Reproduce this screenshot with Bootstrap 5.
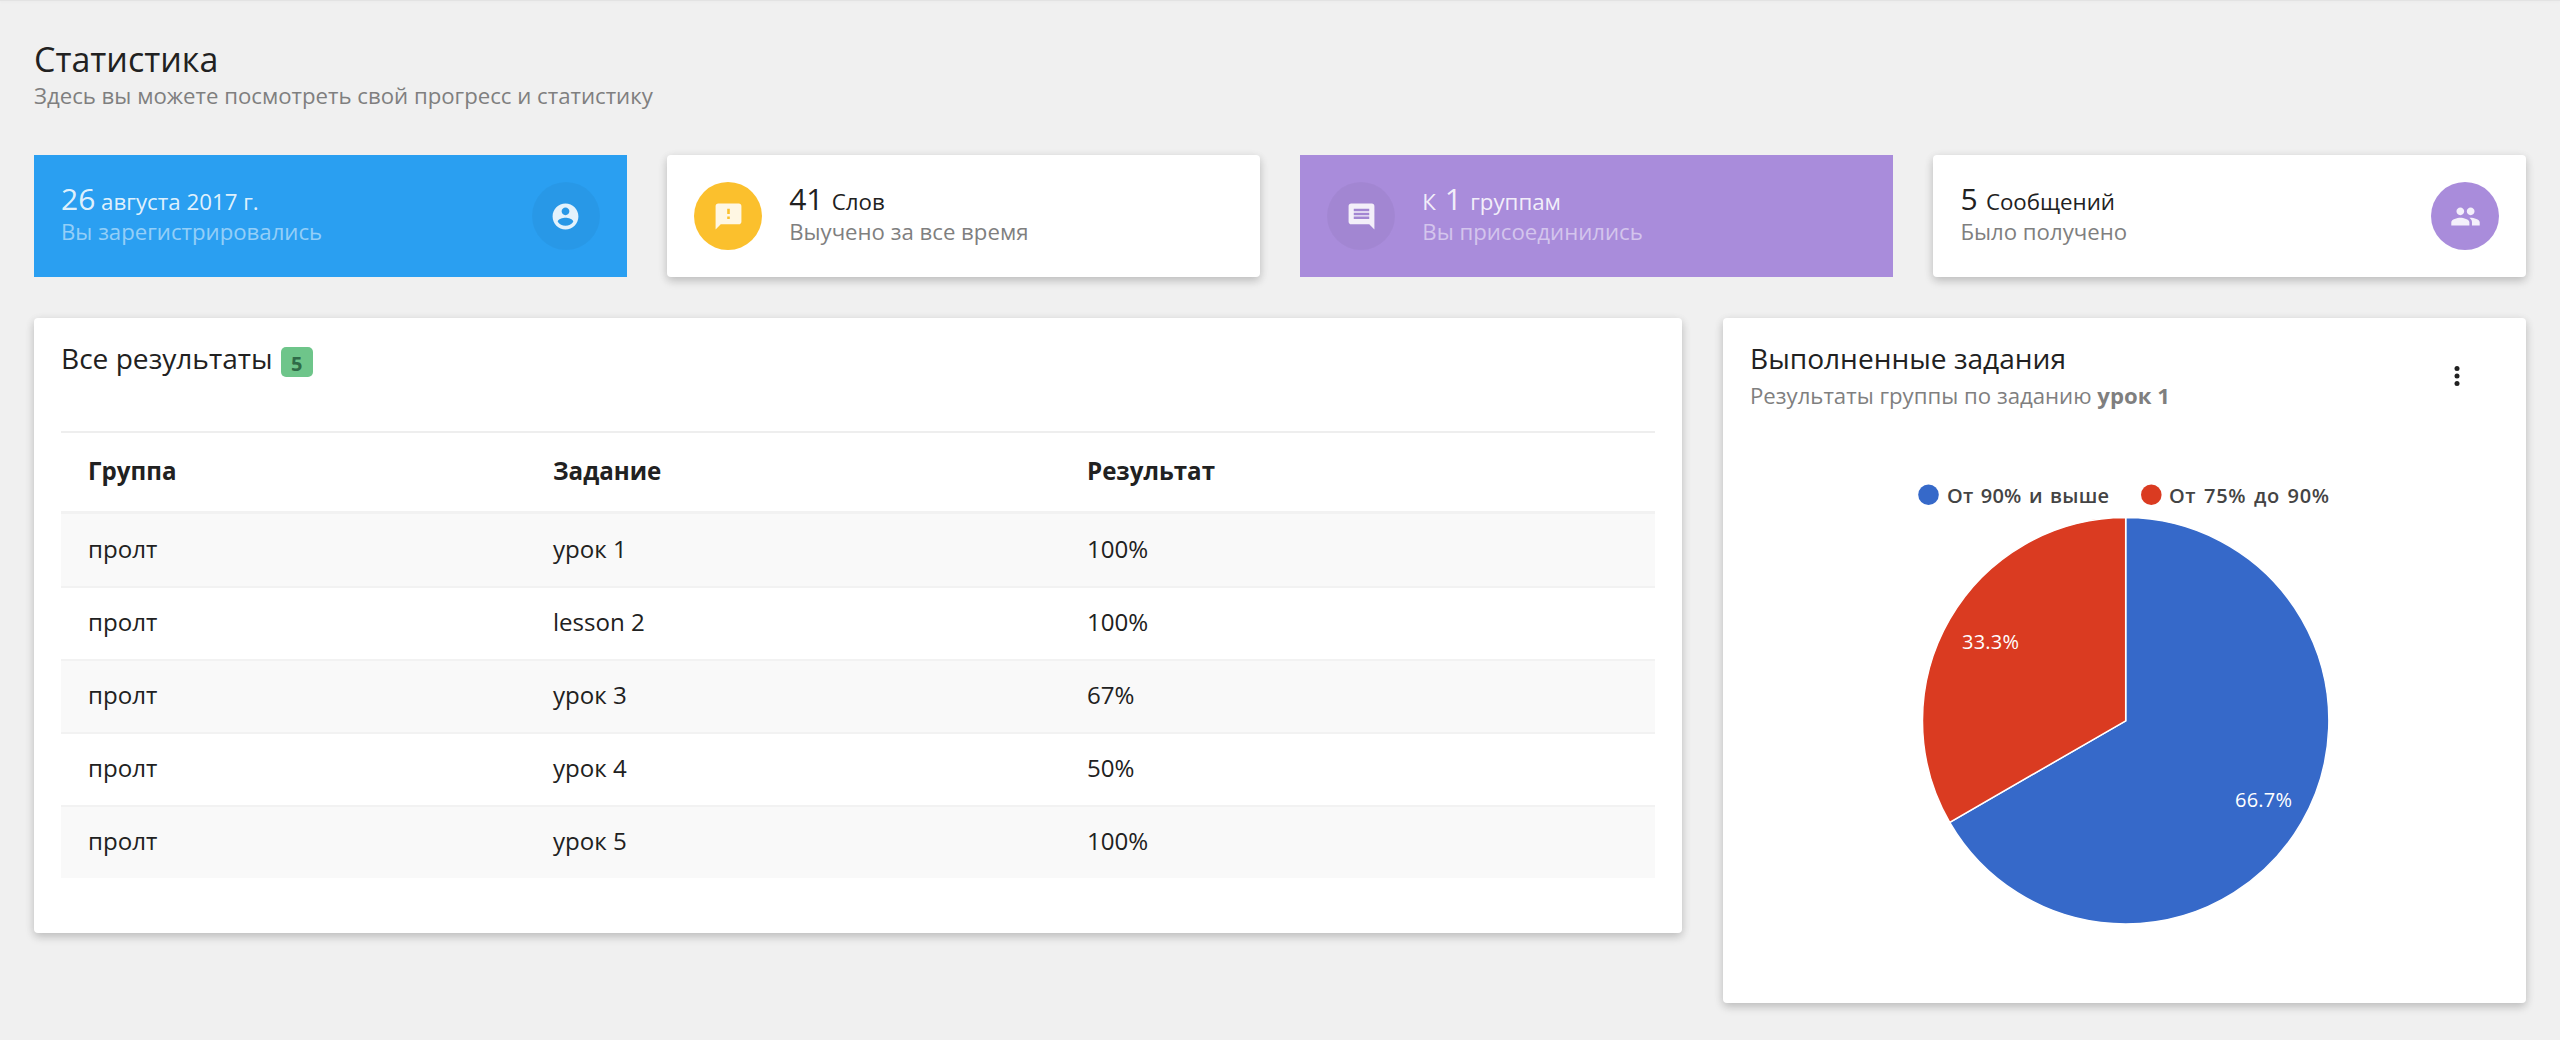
<!DOCTYPE html>
<html lang="ru">
<head>
<meta charset="utf-8">
<title>Статистика</title>
<link href="https://cdn.jsdelivr.net/npm/bootstrap@5.3.0/dist/css/bootstrap.min.css" rel="stylesheet">
<style>
body{font-family:"Open Sans","Noto Sans",sans-serif;background:#f0f0f0;color:#212121;min-height:1040px;overflow:hidden}
.topline{height:1px;background:#e3e3e3;box-shadow:0 1px 3px rgba(0,0,0,.05)}
.page{padding:34px 34px 0}
.page-title{font-size:34px;line-height:48px;font-weight:400;margin:0}
.sub{font-size:22.2px;line-height:26px;color:#7f7f7f;margin:0}
.panel{background:#fff;border-radius:4px;box-shadow:0 4px 10px rgba(0,0,0,.16),0 2px 10px rgba(0,0,0,.08)}
.stats{display:grid;grid-template-columns:repeat(4,1fr);gap:40.6px;margin-top:46px}
.stat{height:122px;padding:0 27px}
.stat-blue{background:#2a9ff1;color:rgba(255,255,255,.87)}
.stat-purple{background:#a98cdb;color:rgba(255,255,255,.87)}
.stat-blue .sub,.stat-purple .sub{color:rgba(255,255,255,.5)}
.num{font-size:30px}
.lbl{font-size:22.3px;line-height:34px;white-space:nowrap}
.num-gap{margin-right:2.5px}
.num-lead{margin-left:3px}
.stat .sub{line-height:26px;margin-bottom:5px}
.disc{width:68px;height:68px;border-radius:50%;flex:none;background:rgba(0,0,0,.04)}
.disc + div{margin-left:27px}
.disc svg{width:31px;height:31px;fill:rgba(255,255,255,.87)}
.disc-amber{background:#fbc02d}.disc-purple{background:#a98cdb}
.lower{display:grid;grid-template-columns:1648px 1fr;gap:41px;margin-top:41px;align-items:start}
.results{height:615px;padding:17px 27px}
.ttl{font-size:28.1px;line-height:46px;font-weight:400;margin:0}
.count{background:#6ec58a;color:#2f6b48;font-size:20px;line-height:34px;width:32px;height:30px;border-radius:5px;font-weight:700;text-align:center;margin:7px 0 0 8px}
.tbl{width:100%;margin:50px 0 0;font-size:24.1px;table-layout:fixed;border-collapse:separate;border-spacing:0}
.tbl th,.tbl td{padding:0 27px 3px;height:73px;border-top:2px solid #f2f2f2;vertical-align:middle;line-height:32px;color:#212121}
.tbl th{height:80px;border-top-color:#eee;padding-bottom:2px}
.tbl tbody tr:first-child td{border-top-width:3px;height:75px}
.tbl tbody tr:nth-child(odd) td{background:#f9f9f9}
.c-group{width:465px}.c-task{width:534px}
.chart-card{height:685px;padding:17px 27px}
.chart-card .sub{margin-top:2px}
.more{width:30px;height:30px;fill:#212121;margin:26px 27px 0 0}
.chart{display:block;width:749px;height:500px;margin-top:26px}
.chart text{font-size:20px}
.chart .legend{font-weight:600;fill:#444;word-spacing:2px}
</style>
</head>
<body>
<div class="topline"></div>
<main class="page">
<h1 class="page-title">Статистика</h1>
<p class="sub">Здесь вы можете посмотреть свой прогресс и статистику</p>
<section class="stats">
<div class="stat stat-blue d-flex align-items-center justify-content-between">
<div><div class="lbl"><span class="num">26</span> августа 2017 г.</div><p class="sub">Вы зарегистрировались</p></div>
<div class="disc d-flex align-items-center justify-content-center"><svg viewBox="0 0 24 24"><path d="M12 2C6.480 2 2 6.480 2 12s4.480 10 10 10 10-4.480 10-10S17.520 2 12 2zm0 3c1.660 0 3 1.340 3 3s-1.340 3-3 3-3-1.340-3-3 1.340-3 3-3zm0 14.200c-2.500 0-4.710-1.280-6-3.220.03-1.990 4-3.080 6-3.080 1.990 0 5.970 1.090 6 3.080-1.290 1.940-3.500 3.220-6 3.220z"/></svg></div>
</div>
<div class="stat panel d-flex align-items-center">
<div class="disc disc-amber d-flex align-items-center justify-content-center"><svg viewBox="0 0 24 24"><path d="M20 2H4c-1.100 0-1.990.9-1.990 2L2 22l4-4h14c1.100 0 2-.9 2-2V4c0-1.100-.9-2-2-2zm-7 12h-2v-2h2v2zm0-4h-2V6h2v4z"/></svg></div>
<div><div class="lbl"><span class="num num-gap">41</span> Слов</div><p class="sub">Выучено за все время</p></div>
</div>
<div class="stat stat-purple d-flex align-items-center">
<div class="disc d-flex align-items-center justify-content-center"><svg viewBox="0 0 24 24"><path d="M21.990 4c0-1.100-.89-2-1.990-2H4c-1.100 0-2 .9-2 2v12c0 1.100.9 2 2 2h14l4 4-.01-18zM18 14H6v-2h12v2zm0-3H6V9h12v2zm0-3H6V6h12v2z"/></svg></div>
<div><div class="lbl">К <span class="num num-lead num-gap">1</span> группам</div><p class="sub">Вы присоединились</p></div>
</div>
<div class="stat panel d-flex align-items-center justify-content-between">
<div><div class="lbl"><span class="num num-gap">5</span> Сообщений</div><p class="sub">Было получено</p></div>
<div class="disc disc-purple d-flex align-items-center justify-content-center"><svg viewBox="0 0 24 24"><path d="M16.670 13.130C18.040 14.060 19 15.320 19 17v2h4v-2.500c0-2.080-3.570-3.110-6.330-3.370zM16 11c1.660 0 2.990-1.340 2.990-3S17.660 5 16 5c-1.660 0-3 1.340-3 3s1.340 3 3 3zm-8 0c1.660 0 2.990-1.340 2.990-3S9.660 5 8 5C6.340 5 5 6.340 5 8s1.340 3 3 3zm0 2c-2.330 0-7 1.170-7 3.500V19h14v-2.500c0-2.330-4.670-3.500-7-3.500zm8 0c-.29 0-.62.020-.97.050 1.160.84 1.970 1.970 1.970 3.450V19h6v-2.500c0-2.330-4.670-3.500-7-3.500z"/></svg></div>
</div>
</section>
<section class="lower">
<div class="panel results">
<div class="d-flex align-items-center"><h2 class="ttl">Все результаты</h2><span class="count">5</span></div>
<table class="tbl">
<colgroup><col class="c-group"><col class="c-task"><col></colgroup>
<thead><tr><th>Группа</th><th>Задание</th><th>Результат</th></tr></thead>
<tbody>
<tr><td>пролт</td><td>урок 1</td><td>100%</td></tr>
<tr><td>пролт</td><td>lesson 2</td><td>100%</td></tr>
<tr><td>пролт</td><td>урок 3</td><td>67%</td></tr>
<tr><td>пролт</td><td>урок 4</td><td>50%</td></tr>
<tr><td>пролт</td><td>урок 5</td><td>100%</td></tr>
</tbody>
</table>
</div>
<div class="panel chart-card">
<div class="d-flex justify-content-between">
<div><h2 class="ttl">Выполненные задания</h2><p class="sub">Результаты группы по заданию <b>урок 1</b></p></div>
<svg class="more" viewBox="0 0 24 24"><circle cx="12" cy="6" r="2"/><circle cx="12" cy="12" r="2"/><circle cx="12" cy="18" r="2"/></svg>
</div>
<svg class="chart" viewBox="1750 435 749 500">
<circle cx="1928.500" cy="494.700" r="10.300" fill="#3669c9"/>
<text class="legend" x="1947" y="503" textLength="162">От 90% и выше</text>
<circle cx="2151.300" cy="494.700" r="10.300" fill="#da3b21"/>
<text class="legend" x="2169" y="503" textLength="160">От 75% до 90%</text>
<path d="M2125.700 720.800V517.600A203.200 203.200 0 1 1 1949.700 822.400Z" fill="#3669c9" stroke="#fff" stroke-width="1.500"/>
<path d="M2125.700 720.800L1949.700 822.400A203.200 203.200 0 0 1 2125.700 517.600Z" fill="#da3b21" stroke="#fff" stroke-width="1.500"/>
<text x="1962" y="649.300" textLength="57" fill="#fff">33.3%</text>
<text x="2235" y="807.300" textLength="57" fill="#fff">66.7%</text>
</svg>
</div>
</section>
</main>
<script src="https://cdn.jsdelivr.net/npm/bootstrap@5.3.0/dist/js/bootstrap.bundle.min.js"></script>
</body>
</html>
